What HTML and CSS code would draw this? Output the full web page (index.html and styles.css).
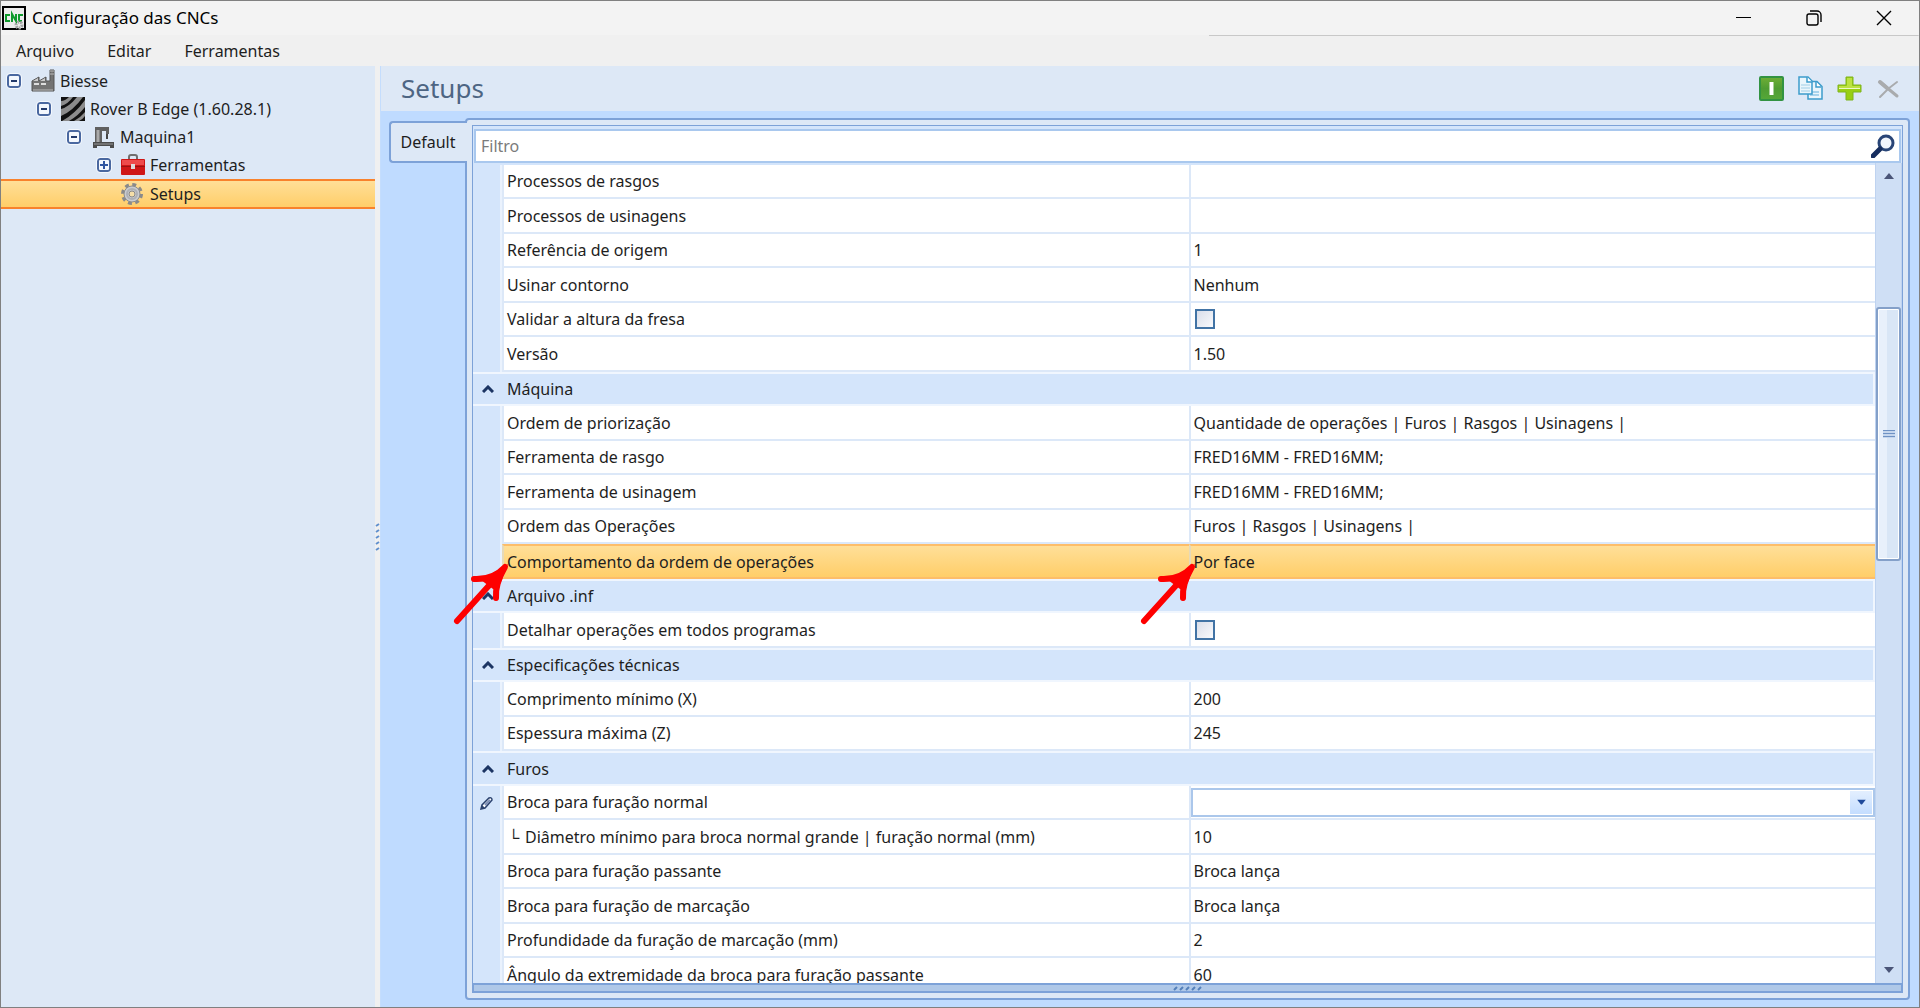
FILE: index.html
```html
<!DOCTYPE html>
<html lang="pt-BR">
<head>
<meta charset="utf-8">
<title>Configuração das CNCs</title>
<link rel="stylesheet" href="styles.css">
</head>
<body>
<div class="window">
  <header class="titlebar">
    <svg class="app-icon" viewBox="0 0 24 24" width="24" height="24" aria-hidden="true">
      <rect x="1" y="1" width="22" height="22" fill="#ececec" stroke="#000" stroke-width="2"/>
      <g fill="none" stroke="#0f9a2c" stroke-width="2"><path d="M8 9H4v6h4"/><path d="M10 16V8l4 7V8"/><path d="M21 9h-4v6h3"/></g>
      <circle cx="17" cy="19" r="3" fill="none" stroke="#a5a5a5" stroke-width="3" stroke-dasharray="2 1"/>
    </svg>
    <h1 class="title">Configuração das CNCs</h1>
    <div class="window-buttons">
      <button class="window-button" aria-label="Minimizar"><svg viewBox="0 0 16 16" width="16" height="16"><path d="M0 7.500H15" stroke="#000"/></svg></button>
      <button class="window-button" aria-label="Restaurar"><svg viewBox="0 0 16 16" width="16" height="16" fill="none" stroke="#000" stroke-width="1.400"><rect x="1" y="4" width="11" height="11" rx="2"/><path d="M4 1h7a4 4 0 0 1 4 4v7"/></svg></button>
      <button class="window-button" aria-label="Fechar"><svg viewBox="0 0 16 16" width="16" height="16"><path d="M1 1l14 14M15 1L1 15" stroke="#000" stroke-width="1.400"/></svg></button>
    </div>
  </header>
  <nav class="menubar">
    <button class="menu">Arquivo</button>
    <button class="menu">Editar</button>
    <button class="menu">Ferramentas</button>
  </nav>
  <div class="workspace">
    <aside class="sidebar">
      <ul class="tree">
        <li class="node level-0"><button class="expander" aria-label="Recolher Biesse"></button>
          <svg class="node-icon" viewBox="0 0 24 24"><path d="M1 12l7-4v4l7-4v4h4V1h4v21H1z" fill="#737373" stroke="#555"/><path d="M2 12l5-3v3zM9 12l5-3v3z" fill="#ccc"/><path d="M3 15h5M10 15h5" stroke="#ddd" stroke-width="2"/><path d="M19 2h4M19 5h4" stroke="#bbb"/><path d="M2 21h20" stroke="#bbb"/></svg>
          <span>Biesse</span></li>
        <li class="node level-1"><button class="expander" aria-label="Recolher Rover B Edge"></button>
          <svg class="node-icon" viewBox="0 0 24 24"><rect width="24" height="24" fill="#8c8c8c"/><path d="M0 4q4 0 8-4H0zM0 12q8-2 16-12h-4Q7 7 0 9zM0 19Q12 14 22 0h2v3Q14 17 1 24H0zM8 24q9-5 16-14v5q-5 6-11 9zM18 24q4-2 6-5v5z" fill="#111"/></svg>
          <span>Rover B Edge (1.60.28.1)</span></li>
        <li class="node level-2"><button class="expander" aria-label="Recolher Maquina1"></button>
          <svg class="node-icon" viewBox="0 0 24 24"><path d="M4 2h14v7h-3V6h-4v11h2v2H3v-2h1z" fill="#606060"/><path d="M16 9v5" stroke="#444" stroke-width="2"/><path d="M7 5v12" stroke="#aaa" stroke-width="3"/><path d="M2 17h21v6h-4v-2H6v2H2z" fill="#4c4c4c"/><path d="M3 19h19" stroke="#999"/></svg>
          <span>Maquina1</span></li>
        <li class="node level-3"><button class="expander collapsed" aria-label="Expandir Ferramentas"></button>
          <svg class="node-icon" viewBox="0 0 24 24"><path d="M8 7V4q0-2 2-2h4q2 0 2 2v3" fill="none" stroke="#707070" stroke-width="2"/><rect y="6" width="24" height="16" rx="1" fill="#cf1717"/><path d="M1 7h22v5H1z" fill="#ee4b4b"/><path d="M0 13h24v1H0z" fill="#9c1212"/><rect x="10" y="11" width="4" height="5" fill="#ddd"/></svg>
          <span>Ferramentas</span></li>
        <li class="node level-3 selected"><span class="expander-space"></span>
          <svg class="node-icon" viewBox="0 0 24 24"><circle cx="11" cy="12" r="9.500" fill="none" stroke="#8a8a8a" stroke-width="3" stroke-dasharray="4 3.460"/><circle cx="11" cy="12" r="8" fill="#c9cbd0" stroke="#8c8c8c"/><circle cx="11" cy="12" r="5" fill="none" stroke="#aeb0b4" stroke-width="2"/><circle cx="11" cy="12" r="3" fill="#f6dfa8" stroke="#8a8a8a"/></svg>
          <span>Setups</span></li>
      </ul>
    </aside>
    <div class="splitter"><svg class="splitter-grip" viewBox="0 0 5 30" width="5" height="30"><path d="M1 4l3-2M1 10l3-2M1 16l3-2M1 22l3-2M1 28l3-2" stroke="#5f8fce" stroke-width="2"/></svg></div>
    <main class="main">
      <header class="panel-header">
        <h2 class="panel-title">Setups</h2>
        <div class="toolbar">
          <button class="tool" aria-label="Ativar"><svg viewBox="0 0 25 25" width="25" height="25"><defs><linearGradient id="green" x2="0" y2="1"><stop offset="0" stop-color="#6fae35"/><stop offset=".5" stop-color="#4f9c32"/><stop offset="1" stop-color="#55a839"/></linearGradient></defs><rect x="1" y="1" width="23" height="23" rx="1" fill="url(#green)" stroke="#329342" stroke-width="2"/><path d="M12.500 6v13" stroke="#fff" stroke-width="4"/></svg></button>
          <button class="tool" aria-label="Copiar"><svg viewBox="0 0 25 25" width="25" height="25" stroke="#3c9ccb" stroke-width="1.500" fill="#eaf6fc"><path d="M10 5.500h9l5 5V23H10z"/><path d="M18 6v5h5" fill="#fff"/><path d="M12 19h9M12 16h9" stroke="#a8d4ec" stroke-width="2"/><path d="M1 1h9l4 4v13H1z"/><path d="M9 1v5h5" fill="#fff"/><path d="M3 9h9M3 12h9M3 15h9" stroke="#b9dced"/></svg></button>
          <button class="tool" aria-label="Adicionar"><svg viewBox="0 0 25 25" width="25" height="25"><path d="M9 1h7v8h8v7h-8v8H9v-8H1V9h8z" fill="#98cf13" stroke="#7fb31c"/><path d="M10 2h5v8h8v2H2v-2h8z" fill="#bce242"/><path d="M2 12.500h21" stroke="#eef9c8"/></svg></button>
          <button class="tool" aria-label="Excluir"><svg viewBox="0 0 25 25" width="25" height="25" fill="none" stroke="#a9abad" stroke-linecap="round"><path d="M4 6L21 20" stroke-width="3"/><path d="M21 6Q12 12 4 21" stroke-width="2"/><path d="M4 6l7 6" stroke-width="4"/></svg></button>
        </div>
      </header>
      <div class="tab-area">
        <div class="tabs" role="tablist"><button class="tab" role="tab" aria-selected="true">Default</button></div>
        <section class="tab-page">
          <div class="grid">
            <div class="filter">
              <input class="filter-input" type="text" placeholder="Filtro" aria-label="Filtro">
              <svg viewBox="0 0 24 24" width="24" height="24" aria-hidden="true"><circle cx="15" cy="9" r="7" fill="#f1f5fc" stroke="#294577" stroke-width="3"/><path d="M9 15l-7 7" stroke="#162d5e" stroke-width="5" stroke-linecap="round"/></svg>
            </div>
            <div class="grid-body">
              <div class="grid-rows">
                <table class="properties">
                  <colgroup><col class="col-gutter"><col><col></colgroup>
                  <tbody>
                    <tr><td class="gutter"></td><td>Processos de rasgos</td><td></td></tr>
                    <tr><td class="gutter"></td><td>Processos de usinagens</td><td></td></tr>
                    <tr><td class="gutter"></td><td>Referência de origem</td><td>1</td></tr>
                    <tr><td class="gutter"></td><td>Usinar contorno</td><td>Nenhum</td></tr>
                    <tr><td class="gutter"></td><td><label for="validar">Validar a altura da fresa</label></td><td><input class="check" type="checkbox" id="validar"></td></tr>
                    <tr><td class="gutter"></td><td>Versão</td><td>1.50</td></tr>
                    <tr class="group"><td class="gutter"><svg class="chevron" viewBox="0 0 12 8"><path d="M1 7l5-5 5 5" /></svg></td><th colspan="2">Máquina</th></tr>
                    <tr><td class="gutter"></td><td>Ordem de priorização</td><td>Quantidade de operações | Furos | Rasgos | Usinagens |</td></tr>
                    <tr><td class="gutter"></td><td>Ferramenta de rasgo</td><td>FRED16MM - FRED16MM;</td></tr>
                    <tr><td class="gutter"></td><td>Ferramenta de usinagem</td><td>FRED16MM - FRED16MM;</td></tr>
                    <tr><td class="gutter"></td><td>Ordem das Operações</td><td>Furos | Rasgos | Usinagens |</td></tr>
                    <tr class="current"><td class="gutter"></td>
                      <td>Comportamento da ordem de operações<svg class="pointer" viewBox="0 0 64 70"><path d="M8 61L54 10M25 19Q44 20 56 7Q46 24 47 38"/><path class="head" d="M59 4L32 20 48 32z"/></svg></td>
                      <td>Por face<svg class="pointer" viewBox="0 0 64 70"><path d="M8 61L54 10M25 19Q44 20 56 7Q46 24 47 38"/><path class="head" d="M59 4L32 20 48 32z"/></svg></td></tr>
                    <tr class="group"><td class="gutter"><svg class="chevron" viewBox="0 0 12 8"><path d="M1 7l5-5 5 5" /></svg></td><th colspan="2">Arquivo .inf</th></tr>
                    <tr><td class="gutter"></td><td><label for="detalhar">Detalhar operações em todos programas</label></td><td><input class="check" type="checkbox" id="detalhar"></td></tr>
                    <tr class="group"><td class="gutter"><svg class="chevron" viewBox="0 0 12 8"><path d="M1 7l5-5 5 5" /></svg></td><th colspan="2">Especificações técnicas</th></tr>
                    <tr><td class="gutter"></td><td>Comprimento mínimo (X)</td><td>200</td></tr>
                    <tr><td class="gutter"></td><td>Espessura máxima (Z)</td><td>245</td></tr>
                    <tr class="group"><td class="gutter"><svg class="chevron" viewBox="0 0 12 8"><path d="M1 7l5-5 5 5" /></svg></td><th colspan="2">Furos</th></tr>
                    <tr><td class="gutter"><svg class="pencil" viewBox="0 0 14 14"><path d="M1 13l1-4 7-7q3-1 3 2L5 12z" fill="#fff" stroke="#2b426f" stroke-width="1.500"/><path d="M5 9l5-5" stroke="#7a8db5" stroke-width="2"/><path d="M1 13l1-4 3 3z" fill="#2b426f"/></svg></td><td><label for="broca">Broca para furação normal</label></td><td class="editing"><span class="combo"><select class="combo-field" id="broca"><option></option></select><svg class="combo-arrow" viewBox="0 0 22 24"><path d="M7 9h9l-4 5h-1z" fill="#1f4a9b"/></svg></span></td></tr>
                    <tr><td class="gutter"></td><td><span class="branch">└</span>Diâmetro mínimo para broca normal grande | furação normal (mm)</td><td>10</td></tr>
                    <tr><td class="gutter"></td><td>Broca para furação passante</td><td>Broca lança</td></tr>
                    <tr><td class="gutter"></td><td>Broca para furação de marcação</td><td>Broca lança</td></tr>
                    <tr><td class="gutter"></td><td>Profundidade da furação de marcação (mm)</td><td>2</td></tr>
                    <tr><td class="gutter"></td><td>Ângulo da extremidade da broca para furação passante</td><td>60</td></tr>
                  </tbody>
                </table>
              </div>
              <div class="scrollbar">
                <button class="scroll-button" aria-label="Rolar para cima"><svg viewBox="0 0 12 8" width="12" height="8"><path d="M1 7l5-6 5 6z" fill="#4a5578"/></svg></button>
                <div class="track"><div class="thumb"><span class="thumb-grip"></span></div></div>
                <button class="scroll-button" aria-label="Rolar para baixo"><svg viewBox="0 0 12 8" width="12" height="8"><path d="M1 1h10L6 7z" fill="#4a5578"/></svg></button>
              </div>
            </div>
            <div class="grid-foot"><svg viewBox="0 0 30 5" width="30" height="5"><path d="M1 4l3-3M7 4l3-3M13 4l3-3M19 4l3-3M25 4l3-3" stroke="#5580ba" stroke-width="2"/></svg></div>
          </div>
        </section>
      </div>
    </main>
  </div>
</div>
</body>
</html>
```
FILE: styles.css
```css
* { box-sizing: border-box; }

body {
  margin: 0;
  font-family: "Noto Sans", "Open Sans", sans-serif;
  font-size: 16px;
  line-height: 24px;
  color: #1e1e1e;
}

button, input, select { font: inherit; color: inherit; }
button { padding: 0; border: 0; background: none; }
svg { flex: none; display: block; }

.window {
  display: flex;
  flex-direction: column;
  height: 100vh;
  border: 1px solid #808080;
  background: #f0f0f0;
}

/* Title bar and menu */
.titlebar {
  display: flex;
  align-items: center;
  height: 34px;
  padding-left: 1px;
  background: #f3f3f3;
}
.title { flex: 1; margin: 0; padding-left: 6px; font-size: 17px; font-weight: 400; color: #000; }
.window-buttons { display: flex; }
.window-button { display: grid; place-items: center; width: 70px; height: 32px; }
.menubar {
  display: flex;
  gap: 33px;
  height: 31px;
  padding: 0 15px;
  background: linear-gradient(#c8c8c8, #c8c8c8) right top / 37% 1px no-repeat;
}

/* Two panes */
.workspace { flex: 1; display: flex; min-height: 0; }
.sidebar { width: 374px; padding-top: 1px; background: #dde8f6; }
.tree { margin: 0; padding: 0; list-style: none; font-size: 16px; }
.node { display: flex; align-items: center; height: 28px; white-space: nowrap; }
.node-icon { width: 24px; height: 24px; margin: 0 5px 0 10px; }
.level-0 { padding-left: 6px; }
.level-1 { padding-left: 36px; }
.level-2 { padding-left: 66px; }
.level-3 { padding-left: 96px; }
.selected {
  height: 30px;
  border: solid #f8822c;
  border-width: 2px 0;
  background: linear-gradient(#ffdf98, #ffce69);
}
.expander, .expander-space { width: 14px; height: 14px; }
.expander {
  border: 2px solid #4a68a0;
  border-radius: 3px;
  outline: 1px solid #f4f8fd;
  background: linear-gradient(#22396b, #22396b) center / 6px 2px no-repeat #f3f7fd;
}
.collapsed {
  background:
    linear-gradient(#2f55a0, #2f55a0) center / 8px 2px no-repeat,
    linear-gradient(#2f55a0, #2f55a0) center / 2px 8px no-repeat,
    #f3f7fd;
}
.splitter { display: grid; place-items: center; width: 5px; }

.main { flex: 1; display: flex; flex-direction: column; min-width: 0; border-left: 1px solid #c4ddfd; background: #bfdbff; }
.panel-header {
  display: flex;
  align-items: center;
  justify-content: space-between;
  height: 45px;
  padding: 0 18px 0 20px;
  background: #dde8f6;
}
.panel-title { margin: 0; font-size: 26px; line-height: 45px; font-weight: 400; color: #4d6583; }
.toolbar { display: flex; gap: 14px; }

/* Tab and its page */
.tab-area { flex: 1; display: flex; min-height: 0; padding: 7px 9px 7px 8px; }
.tabs { padding-top: 3px; }
.tab {
  position: relative;
  z-index: 1;
  width: 78px;
  height: 42px;
  margin-right: -2px;
  padding-right: 2px;
  border: solid #7da2d8;
  border-width: 2px 0 2px 2px;
  border-radius: 4px 0 0 4px;
  background: #dde8f6;
  text-align: center;
}
.tab-page {
  flex: 1;
  min-width: 0;
  padding: 5px;
  border: 2px solid #7da2d8;
  border-radius: 4px;
  background: #dde8f6;
}
.grid { display: flex; flex-direction: column; height: 100%; border: 1px solid #7da2d8; background: #d4e5fb; }

.filter {
  display: flex;
  align-items: center;
  height: 34px;
  margin: 3px 1px 0;
  padding-right: 4px;
  border: 2px solid #a9c8ee;
  background: #fff;
}
.filter-input { flex: 1; min-width: 0; height: 30px; padding: 0 5px; border: 0; outline: 0; background: none; }
.filter-input::placeholder { color: #7b7b7b; opacity: 1; }

.grid-body { flex: 1; display: flex; min-height: 0; }
.grid-rows { flex: 1; min-width: 0; padding-top: 2px; overflow-x: visible; overflow-y: clip; }

.properties { width: 100%; table-layout: fixed; border-collapse: separate; border-spacing: 0; }
.col-gutter { width: 29px; }
.properties tr { height: 34px; }
.properties tr:nth-child(even) { height: 35px; }
.properties td, .properties th {
  padding: 0 3px;
  border: solid #dce8f8;
  border-width: 0 0 2px 2px;
  background: #fff;
  font-weight: 400;
  text-align: left;
  white-space: nowrap;
}
.properties .gutter { border-width: 0; border-right: 2px solid #eaf2fd; background: #d4e5fb; padding: 0 7px; }
.properties .group .gutter, .properties .group th { border: solid #f0f6fe; border-width: 2px 0; background: #d4e5fb; }
.properties .group th { padding-left: 5px; border-right-width: 2px; }
.properties .current td:not(.gutter) {
  position: relative;
  z-index: 1;
  border-top: 2px solid #fdbd69;
  border-bottom: 2px solid #fdbd69;
  border-left-color: #e6d9b8;
  background: linear-gradient(#ffdf98, #ffce69);
}
.chevron { width: 12px; height: 8px; margin: auto; fill: none; stroke: #1c3563; stroke-width: 3; }
.pencil { width: 14px; height: 14px; margin: auto; }
.branch { display: inline-block; width: 18px; padding-left: 1px; font-weight: 700; }

/* Red arrows pointing at the current row */
.pointer {
  position: absolute;
  left: -55px;
  top: 14px;
  width: 64px;
  height: 70px;
  fill: none;
  stroke: #fe0000;
  stroke-width: 6;
  stroke-linecap: round;
  stroke-linejoin: round;
}
.pointer .head { fill: #fe0000; stroke: none; }

.check {
  appearance: none;
  display: block;
  width: 20px;
  height: 20px;
  margin: 0 1px;
  border: 2px solid #4173a5;
  background: linear-gradient(135deg, #d9deea, #f8f9fc);
}

.properties .editing { padding: 0; }
.combo { display: flex; position: relative; height: 29px; }
.combo-field { appearance: none; width: 100%; border: 2px solid #abc7eb; border-radius: 0; background: #fff; }
.combo-arrow { position: absolute; right: 3px; top: 3px; width: 22px; height: 23px; background: linear-gradient(#e3efff, #c4ddff); pointer-events: none; }

/* Scroll bar */
.scrollbar { display: flex; flex-direction: column; width: 27px; border: solid #bfd3f0; border-width: 0 1px; background: #cfdff5; }
.scroll-button { display: grid; place-items: center; width: 100%; height: 26px; }
.track { flex: 1; padding-top: 118px; }
.thumb {
  display: grid;
  place-items: center;
  height: 254px;
  border: 2px solid #84a0c9;
  border-radius: 3px;
  box-shadow: inset 0 0 0 1px #fff;
  background: linear-gradient(90deg, #e8f0fb 45%, #d9e6f6 45%);
}
.thumb-grip { width: 12px; height: 8px; background: repeating-linear-gradient(#6f92c4 0 1px, #c5d6ed 1px 3px); }
.grid-foot { display: grid; place-items: center; height: 9px; border: solid #7da2d8; border-width: 2px 1px 1px; background: #afc8e8; }
```
